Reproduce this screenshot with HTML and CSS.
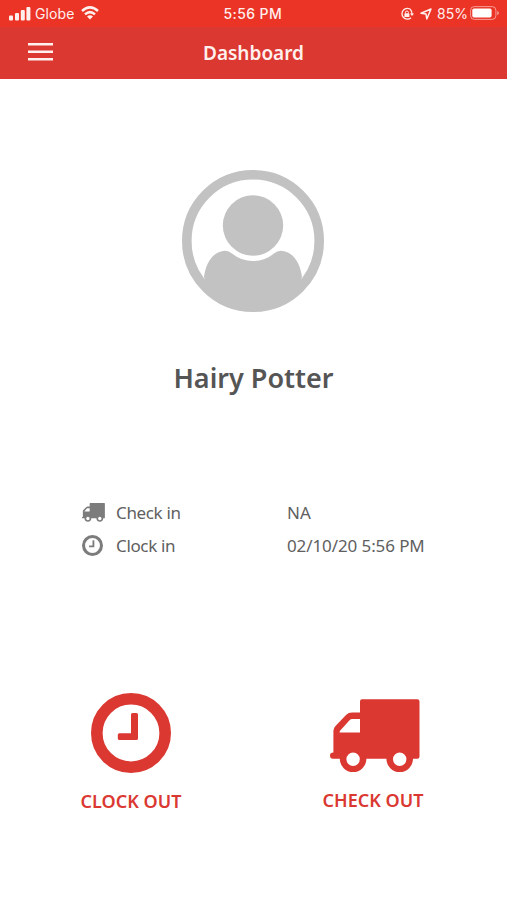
FILE: index.html
```html
<!DOCTYPE html>
<html lang="en">
<head>
<meta charset="utf-8">
<title>Dashboard</title>
<link rel="stylesheet" href="styles.css">
</head>
<body>
<svg width="0" height="0" class="defs">
  <symbol id="truck" viewBox="0 0 90 74">
    <path fill-rule="evenodd" d="M32 0.3H87.3Q89.5 0.3 89.5 2.5V57.5Q89.5 59.8 87.3 59.8H83A13.3 13.3 0 1 1 56.4 59.8H36.4A13.3 13.3 0 1 1 9.8 59.8H3Q0 59.8 0 56.5Q0 53.7 3.4 53.5V32Q3.4 29 5.5 27L16 16Q18.5 13.6 22 13.6H30V2.5Q30 .3 32 .3ZM9.5 33.5H30V20H22Q20.8 20 20 20.8L10 31.8ZM23.1 53.6A6.7 6.7 0 1 0 23.1 67A6.7 6.7 0 1 0 23.1 53.6ZM69.7 53.6A6.7 6.7 0 1 0 69.7 67A6.7 6.7 0 1 0 69.7 53.6Z"/>
  </symbol>
  <symbol id="clock" viewBox="0 0 80 80">
    <circle cx="40" cy="40" r="34.2" fill="none" stroke="currentColor" stroke-width="11.6"/>
    <path d="M41.6 20H45.4Q47 20 47 21.6V45.4Q47 47 45.4 47H28.4Q26.8 47 26.8 45.4V41.8Q26.8 40.2 28.4 40.2H40V21.6Q40 20 41.6 20Z"/>
  </symbol>
</svg>
<header>
  <div class="status">
    <div class="carrier">
      <svg class="signal" width="22" height="14" viewBox="0 0 22 14"><rect x="0" y="8.4" width="4" height="5" rx="1"/><rect x="6" y="6" width="4" height="7.4" rx="1"/><rect x="11.8" y="3" width="4" height="10.4" rx="1"/><rect x="17.4" y="0" width="4" height="13.4" rx="1"/></svg>
      <span class="network">Globe</span>
      <svg class="wifi" width="18" height="14" viewBox="0 0 18 14"><g fill="none" stroke="currentColor" stroke-width="2.5"><path d="M1 5Q9-2.2 17 5"/><path d="M4 8.4Q9 3.9 14 8.4"/></g><path d="M6 10.5Q9 8.1 12 10.5L9 13.5Z"/></svg>
    </div>
    <time>5:56 PM</time>
    <div class="power">
      <svg width="14" height="14" viewBox="0 0 14 14"><path d="M11 2.7A5.4 5.4 0 1 0 11 10.7M12 7A5.3 5.3 0 0 0 10.5 2.8" fill="none" stroke="currentColor" stroke-width="1.3"/><path d="M10 6.4H14L12 8.9Z"/><rect x="4.4" y="6.3" width="5" height="3.7" rx=".6"/><path d="M5.4 6.5V5.5a1.5 1.5 0 0 1 3 0v1" fill="none" stroke="currentColor"/></svg>
      <svg class="arrow" width="12" height="12" viewBox="0 0 12 12"><path d="M1 5.3L11 1L6.8 11L6 6Z" fill="none" stroke="currentColor" stroke-width="1.5" stroke-linejoin="round"/></svg>
      <span class="percent">85%</span>
      <svg class="battery" width="30" height="14" viewBox="0 0 30 14"><rect x=".6" y=".6" width="25.3" height="12.8" rx="3.7" fill="none" stroke="currentColor" opacity=".5"/><rect x="2.3" y="2.4" width="19.3" height="9.2" rx="1.8"/><path d="M27.2 4.9Q29 5.5 29 7T27.2 9.2Z" opacity=".5"/></svg>
    </div>
  </div>
  <nav>
    <button class="menu" aria-label="Menu"><svg width="25" height="18" viewBox="0 0 25 18"><path d="M0 0H25V2.6H0ZM0 7.5H25V10.1H0ZM0 15H25V17.6H0Z"/></svg></button>
    <h1>Dashboard</h1>
  </nav>
</header>
<main>
  <section class="profile">
    <svg class="avatar" width="142" height="142" viewBox="0 0 142 142"><circle cx="71" cy="71" r="66.2" fill="none" stroke="currentColor" stroke-width="9.6"/><circle cx="71" cy="55.5" r="30.2"/><path d="M22 107C24 93 30 83 41 81Q46 80 50 83.5Q59 91 71 91T92 83.5Q96 80 101 81C112 83 118 93 120 107L116 118A66 66 0 0 1 26 118Z"/></svg>
    <h2>Hairy Potter</h2>
  </section>
  <dl>
    <dt><svg class="mini-truck"><use href="#truck"/></svg><span>Check in</span></dt><dd>NA</dd>
    <dt><svg class="mini-clock"><use href="#clock"/></svg><span>Clock in</span></dt><dd class="date">02/10/20 5:56 PM</dd>
  </dl>
  <section class="actions">
    <button class="action"><svg class="big-clock"><use href="#clock"/></svg><span>CLOCK OUT</span></button>
    <button class="action"><svg class="big-truck"><use href="#truck"/></svg><span>CHECK OUT</span></button>
  </section>
</main>
</body>
</html>
```
FILE: styles.css
```css
* { box-sizing: border-box; }
body { margin: 0; height: 900px; background: #fff; color: #606060; font-family: "Noto Sans", sans-serif; overflow: hidden; }
svg { display: block; fill: currentColor; flex: none; }
.defs { position: absolute; }
h1, h2, dl, dd { margin: 0; }
button { border: 0; padding: 0; background: none; font: inherit; color: inherit; }
header { height: 79px; background: #db3832; color: #fff0ed; }
.status { height: 27px; display: grid; grid-template-columns: 1fr 60px 1fr; align-items: center; background: #eb3426; font: 14px/27px Inter, sans-serif; }
.carrier { display: flex; align-items: center; padding-left: 9px; }
.network { width: 41px; margin-left: 4px; letter-spacing: .1px; white-space: nowrap; }
.wifi { margin-left: 5px; margin-bottom: 1px; }
time { font-weight: 500; font-size: 14px; letter-spacing: .4px; white-space: nowrap; }
.power { display: flex; align-items: center; justify-content: flex-end; padding-right: 7px; }
.arrow { margin-left: 6px; }
.percent { margin-left: 5px; width: 31px; white-space: nowrap; }
.battery { margin-left: 2px; margin-bottom: 1px; color: #fff; }
nav { height: 52px; display: grid; grid-template-columns: 53px 1fr 53px; align-items: center; }
.menu { width: 25px; margin: 0 0 2px 28px; }
h1 { text-align: center; font-size: 19px; font-weight: 600; line-height: 52px; }
.profile { display: flex; flex-direction: column; align-items: center; padding-top: 91px; }
.avatar { color: #c2c2c2; margin-right: 1px; }
h2 { margin-top: 46px; color: #555; font-size: 27px; line-height: 40px; font-weight: 600; }
dl { display: grid; grid-template-columns: 205px 1fr; grid-auto-rows: 33px; align-items: center; margin: 98px 0 0 82px; font-size: 17px; }
dt { display: flex; align-items: center; }
dt svg { color: #7c7c7c; }
dt span { margin-left: 11px; letter-spacing: -.35px; }
.date { letter-spacing: -.1px; }
.mini-truck { width: 23px; height: 19px; }
.mini-clock { width: 21px; height: 21px; margin-right: 2px; }
.actions { display: grid; grid-template-columns: 102px 102px; column-gap: 140px; margin: 131px 0 0 80px; color: #db3832; }
.action { display: flex; flex-direction: column; align-items: center; font-size: 18px; line-height: 24px; font-weight: 600; white-space: nowrap; }
.big-clock { width: 80px; height: 80px; margin-bottom: 16px; }
.big-truck { width: 90px; height: 74px; margin: 6px 0 15px 4px; }
```
